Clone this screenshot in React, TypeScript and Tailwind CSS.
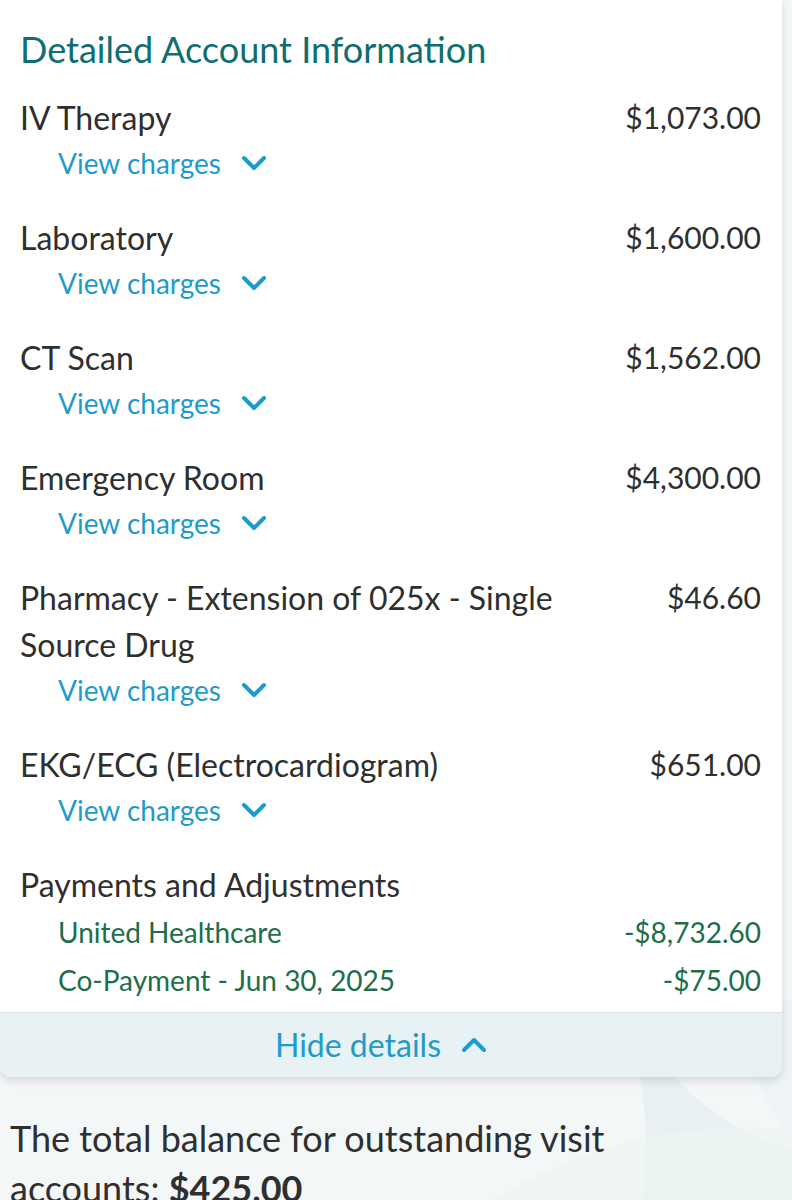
import { ReactNode } from 'react'

const charges = [
  { label: 'IV Therapy', amount: '$1,073.00' },
  { label: 'Laboratory', amount: '$1,600.00' },
  { label: 'CT Scan', amount: '$1,562.00' },
  { label: 'Emergency Room', amount: '$4,300.00' },
  { label: 'Pharmacy - Extension of 025x - Single Source Drug', amount: '$46.60' },
  { label: 'EKG/ECG (Electrocardiogram)', amount: '$651.00' },
]

const payments = [
  { label: 'United Healthcare', amount: '-$8,732.60' },
  { label: 'Co-Payment - Jun 30, 2025', amount: '-$75.00' },
]

function Chevron({ up }: { up?: boolean }) {
  return (
    <svg width="26" height="16" viewBox="0 0 26 16" className="shrink-0">
      <path
        d={up ? 'M3 13 L13 3 L23 13' : 'M3 3 L13 13 L23 3'}
        fill="none"
        stroke="#1b9bd0"
        strokeWidth="4"
        strokeLinecap="round"
        strokeLinejoin="round"
      />
    </svg>
  )
}

function ChargeRow({ label, amount }: { label: string; amount: string }) {
  return (
    <div className="mb-[29px]">
      <div className="flex justify-between gap-10 leading-[47px] text-[#2f2f2f]">
        <span className="max-w-[540px] text-[32px]">{label}</span>
        <span className="text-[30px]">{amount}</span>
      </div>
      <button className="ml-[38px] flex h-[44px] items-center gap-[20px] text-[28px] text-[#1f9bc9]">
        View charges
        <Chevron />
      </button>
    </div>
  )
}

function Background({ children }: { children: ReactNode }) {
  return (
    <div className="relative min-h-[1200px] overflow-hidden bg-[#f4f7f8] font-['Lato',sans-serif]">
      <svg
        className="absolute right-0 top-[1000px]"
        width="300"
        height="200"
        viewBox="0 0 300 200"
      >
        <path d="M130 0 C170 80 230 130 300 150 L300 200 L150 200 C160 140 150 60 130 0 Z" fill="#e9f0f2" />
        <path d="M240 0 L300 0 L300 140 C270 100 250 50 240 0 Z" fill="#eef4f5" />
        <path d="M0 200 C100 140 200 120 300 130 L300 200 Z" fill="#edf3f4" opacity="0.7" />
      </svg>
      <div className="relative">{children}</div>
    </div>
  )
}

export default function App() {
  return (
    <Background>
      <div className="mr-[10px] rounded-b-xl bg-white shadow-[0_4px_8px_rgba(0,0,0,0.12)]">
        <div className="pl-5 pr-[21px] pt-[26px] pb-2">
          <h2 className="mb-[21px] text-[36px] leading-[47px] text-[#0f6e71]">
            Detailed Account Information
          </h2>
          {charges.map((c) => (
            <ChargeRow key={c.label} label={c.label} amount={c.amount} />
          ))}
          <div className="text-[32px] leading-[47px] text-[#2f2f2f]">
            Payments and Adjustments
          </div>
          {payments.map((p) => (
            <div
              key={p.label}
              className="ml-[38px] flex justify-between text-[28px] leading-[48px] text-[#1d6e4c]"
            >
              <span>{p.label}</span>
              <span>{p.amount}</span>
            </div>
          ))}
        </div>
        <button className="flex h-[65px] w-full items-center justify-center gap-[20px] rounded-b-xl border-t border-[#dfe3e4] bg-[#e8f1f3] pr-5 text-[32px] text-[#1f9bc9]">
          Hide details
          <Chevron up />
        </button>
      </div>
      <p className="max-w-[660px] px-[10px] pt-[36px] text-[36px] leading-[50px] text-[#2f2f2f]">
        The total balance for outstanding visit accounts:{' '}
        <span className="font-bold">$425.00</span>
      </p>
    </Background>
  )
}
